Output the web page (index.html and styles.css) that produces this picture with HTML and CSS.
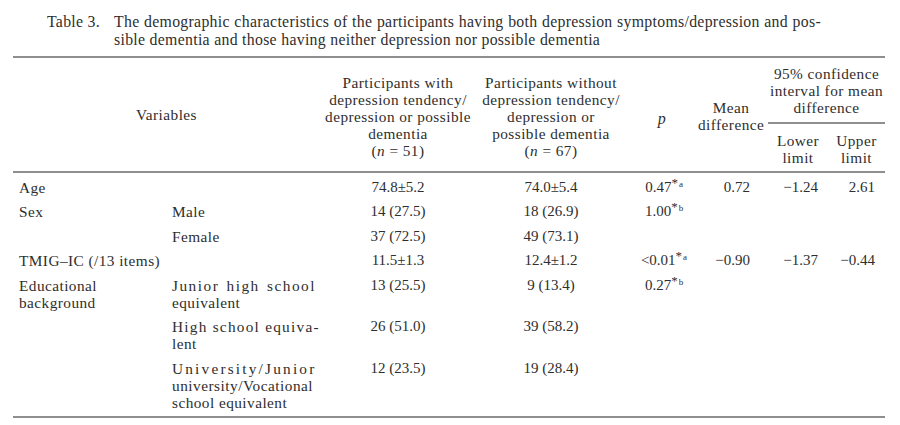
FILE: index.html
```html
<!DOCTYPE html>
<html lang="en">
<head>
<meta charset="utf-8">
<title>Table 3</title>
<link rel="stylesheet" href="styles.css">
</head>
<body>
<div class="page">
  <div class="caption">
    <div class="cap-label">Table 3.</div>
    <div class="cap-text">
      <span class="cap-line1">The demographic characteristics of the participants having both depression symptoms/depression and pos-</span>
      <span class="cap-line2">sible dementia and those having neither depression nor possible dementia</span>
    </div>
  </div>
  <table class="tbl">
    <colgroup>
      <col class="c1"><col class="c2"><col class="c3"><col class="c4"><col class="c5"><col class="c6"><col class="c7"><col class="c8">
    </colgroup>
    <thead>
      <tr>
        <th colspan="2" rowspan="2" class="h-var">Variables</th>
        <th rowspan="2" class="h-grp">Participants with<br>depression tendency/<br>depression or possible<br>dementia<br>(<i>n</i> = 51)</th>
        <th rowspan="2" class="h-grp">Participants without<br>depression tendency/<br>depression or<br>possible dementia<br>(<i>n</i> = 67)</th>
        <th rowspan="2" class="h-p"><i>p</i></th>
        <th rowspan="2" class="h-md">Mean<br>difference</th>
        <th colspan="2" class="h-ci">95% confidence<br>interval for mean<br>difference</th>
      </tr>
      <tr>
        <th class="h-lim">Lower<br>limit</th>
        <th class="h-lim">Upper<br>limit</th>
      </tr>
    </thead>
    <tbody>
      <tr>
        <td class="var">Age</td>
        <td class="sub"></td>
        <td class="num">74.8±5.2</td>
        <td class="num">74.0±5.4</td>
        <td class="num pv">0.47<sup class="sig"><span class="ast">*</span>a</sup></td>
        <td class="num md">0.72</td>
        <td class="num lim">−1.24</td>
        <td class="num lim">2.61</td>
      </tr>
      <tr>
        <td class="var">Sex</td>
        <td class="sub">Male</td>
        <td class="num">14 (27.5)</td>
        <td class="num">18 (26.9)</td>
        <td class="num pv">1.00<sup class="sig"><span class="ast">*</span>b</sup></td>
        <td></td><td></td><td></td>
      </tr>
      <tr>
        <td class="var"></td>
        <td class="sub">Female</td>
        <td class="num">37 (72.5)</td>
        <td class="num">49 (73.1)</td>
        <td></td><td></td><td></td><td></td>
      </tr>
      <tr>
        <td class="var">TMIG–IC (/13 items)</td>
        <td class="sub"></td>
        <td class="num">11.5±1.3</td>
        <td class="num">12.4±1.2</td>
        <td class="num pv">&lt;0.01<sup class="sig"><span class="ast">*</span>a</sup></td>
        <td class="num md">−0.90</td>
        <td class="num lim">−1.37</td>
        <td class="num lim">−0.44</td>
      </tr>
      <tr>
        <td class="var">Educational<br>background</td>
        <td class="sub"><span class="jl ls-a">Junior high school</span><span class="ln">equivalent</span></td>
        <td class="num">13 (25.5)</td>
        <td class="num">9 (13.4)</td>
        <td class="num pv">0.27<sup class="sig"><span class="ast">*</span>b</sup></td>
        <td></td><td></td><td></td>
      </tr>
      <tr>
        <td class="var"></td>
        <td class="sub"><span class="jl ls-b">High school equiva-</span><span class="ln">lent</span></td>
        <td class="num">26 (51.0)</td>
        <td class="num">39 (58.2)</td>
        <td></td><td></td><td></td><td></td>
      </tr>
      <tr class="last">
        <td class="var"></td>
        <td class="sub"><span class="jl ls-c">University/Junior</span><span class="jl ls-d">university/Vocational</span><span class="ln">school equivalent</span></td>
        <td class="num">12 (23.5)</td>
        <td class="num">19 (28.4)</td>
        <td></td><td></td><td></td><td></td>
      </tr>
    </tbody>
  </table>
</div>
</body>
</html>
```

FILE: styles.css
```css
html, body {
  margin: 0;
  padding: 0;
  background: #ffffff;
}

body {
  font-family: "Liberation Serif", "Times New Roman", serif;
  font-size: 15.3px;
  letter-spacing: 0.45px;
  color: #2e2e2e;
}

.page {
  width: 900px;
  height: 425px;
  padding-top: 13px;
  box-sizing: border-box;
}

.caption {
  display: flex;
  padding-left: 47px;
  line-height: 18px;
  margin-bottom: 7px;
  font-size: 15.8px;
  letter-spacing: 0.3px;
}

.cap-label {
  width: 67px;
  flex: none;
}

.cap-text {
  width: 707px;
  flex: none;
}

.cap-line1 {
  display: block;
  text-align: justify;
  text-align-last: justify;
  white-space: nowrap;
}

.cap-line2 {
  display: block;
  white-space: nowrap;
}

.tbl {
  margin-left: 13px;
  width: 872px;
  table-layout: fixed;
  border-collapse: separate;
  border-spacing: 0;
  border-top: 2px solid #8f8f8f;
  border-bottom: 2px solid #8f8f8f;
}

.c1 { width: 159px; }
.c2 { width: 148px; }
.c3 { width: 156px; }
.c4 { width: 150px; }
.c5 { width: 72px; }
.c6 { width: 70px; }
.c7 { width: 60px; }
.c8 { width: 57px; }

th {
  font-weight: normal;
  line-height: 17px;
  padding: 0;
  text-align: center;
  vertical-align: middle;
  white-space: nowrap;
}

th.h-grp {
  padding-top: 3px;
}

th.h-ci {
  padding: 6.5px 0 6.5px;
  border-bottom: 2px solid #8f8f8f;
}

th.h-lim {
  padding: 7.5px 0 5.5px;
}

th.h-p {
  padding-top: 8px;
  font-size: 16px;
}

th.h-md {
  padding-top: 2px;
  padding-right: 4px;
}

td {
  padding: 3.75px 0;
  line-height: 17px;
  vertical-align: top;
  white-space: nowrap;
}

tbody tr:first-child td {
  border-top: 2px solid #8f8f8f;
  padding-top: 5.5px;
}

tbody tr.last td {
  padding-bottom: 5px;
}

td.var {
  padding-left: 6px;
}

td.sub {
  padding-right: 4px;
}

.jl {
  display: block;
  width: 144px;
  text-align: justify;
  text-align-last: justify;
}

.ln {
  display: block;
}

.ls-a { letter-spacing: 1.5px; }
.ls-b { letter-spacing: 1.25px; }
.ls-c { letter-spacing: 2.2px; }
.ls-d { letter-spacing: 0.5px; }

td.num {
  font-size: 15px;
  letter-spacing: 0;
  text-align: center;
}

td.md {
  text-align: right;
  padding-right: 18px;
}

td.lim {
  text-align: right;
  padding-right: 10px;
}

td.pv {
  padding-left: 4px;
}

.sig {
  font-size: 9px;
  line-height: 0;
  vertical-align: 5px;
}

.ast {
  font-size: 13px;
  padding-right: 1px;
}
```
